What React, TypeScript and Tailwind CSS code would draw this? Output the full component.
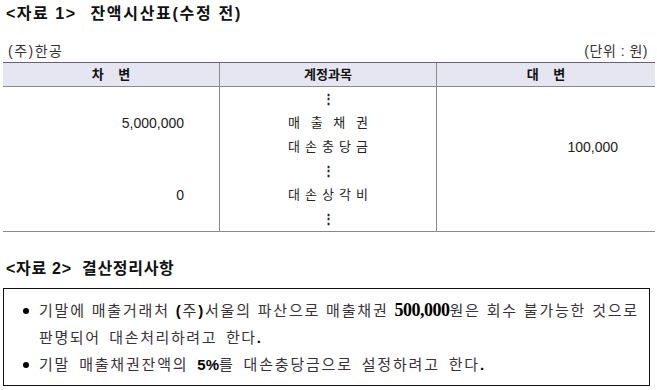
import React from "react";

const sans = "font-['Liberation_Sans','Noto_Sans_CJK_KR',sans-serif]";

const Spread: React.FC<{ text: string[] }> = ({ text }) => (
    <span className="inline-flex w-[80px] justify-between">
        {text.map((c, i) => (
            <span key={i}>{c}</span>
        ))}
    </span>
);

const Bullet = () => (
    <span className="w-[35px] flex justify-end pr-[10px] pt-[11px] shrink-0">
        <span className="block w-[6px] h-[6px] rounded-full bg-black" />
    </span>
);

export default function App() {
    return (
        <div className={`${sans} w-[657px] h-[390px] bg-white text-[#222] overflow-hidden`}>
            {/* 자료 1 */}
            <h2 className="pl-[6px] pt-[4px] h-[22px] text-[16px] leading-[20px] font-bold tracking-[1.5px] text-[#111]">
                &lt;자료 1&gt;&nbsp;{" "}
                <span className="ml-[2px] tracking-[1.7px]">잔액시산표(수정 전)</span>
            </h2>

            <div className="flex justify-between items-end px-[8px] mt-[16px] h-[22px] text-[14px] leading-[18px] tracking-[0.5px] text-[#333]">
                <span className="tracking-[1.5px]">(주)한공</span>
                <span className="pr-[1px]">(단위 : 원)</span>
            </div>

            {/* Trial balance table */}
            <div className="ml-[3px] mr-[2px] mt-[2px] border-b border-[#8a8a8a]">
                <div className="grid grid-cols-[217px_217px_1fr] h-[25px] bg-[#e6e6f2] border-t border-b border-t-[#6e5f75] border-b-[#8a8a8a] text-[13px] font-bold text-[#111] leading-[23px]">
                    <div className="text-center border-r border-[#8a8a8a]">차&nbsp;&nbsp;&nbsp;&nbsp;변</div>
                    <div className="text-center border-r border-[#8a8a8a]">계정과목</div>
                    <div className="text-center">대&nbsp;&nbsp;&nbsp;&nbsp;변</div>
                </div>
                <div className="grid grid-cols-[217px_217px_1fr] text-[14px] leading-[24px]">
                    <div className="flex flex-col items-end pr-[35px] border-r border-[#8a8a8a]">
                        <span>&nbsp;</span>
                        <span>5,000,000</span>
                        <span>&nbsp;</span>
                        <span>&nbsp;</span>
                        <span>0</span>
                        <span>&nbsp;</span>
                    </div>
                    <div className="flex flex-col items-center border-r border-[#8a8a8a] text-[13px]">
                        <span className="font-bold">⋮</span>
                        <Spread text={["매", "출", "채", "권"]} />
                        <Spread text={["대", "손", "충", "당", "금"]} />
                        <span className="font-bold">⋮</span>
                        <Spread text={["대", "손", "상", "각", "비"]} />
                        <span className="font-bold">⋮</span>
                    </div>
                    <div className="flex flex-col items-end pr-[37px]">
                        <span>&nbsp;</span>
                        <span>&nbsp;</span>
                        <span>100,000</span>
                        <span>&nbsp;</span>
                        <span>&nbsp;</span>
                        <span>&nbsp;</span>
                    </div>
                </div>
            </div>

            {/* 자료 2 */}
            <h2 className="pl-[6px] mt-[27px] h-[22px] text-[16px] leading-[20px] font-bold tracking-[0.7px] text-[#111]">
                &lt;자료 2&gt;&nbsp; 결산정리사항
            </h2>

            <div className="ml-[3px] w-[647px] h-[98px] mt-[7px] border border-[#111] pt-[8px] text-[15px] leading-[27px] text-[#3a3238]">
                <div className="flex">
                    <Bullet />
                    <p className="whitespace-nowrap">
                        <span className="tracking-[1.8px]">
                            기말에 매출거래처 <b className="text-black">(</b>주<b className="text-black">)</b>서울의 파산으로 매출채권{" "}
                            <b className="font-['Liberation_Serif'] text-[18px] text-black tracking-[-0.5px]">500,000</b>원은 회수 불가능한 것으로
                        </span>
                        <br />
                        <span className="tracking-[1.6px] [word-spacing:3px]">
                            판명되어 대손처리하려고 한다<b className="text-black">.</b>
                        </span>
                    </p>
                </div>
                <div className="flex">
                    <Bullet />
                    <p className="whitespace-nowrap tracking-[1.8px] [word-spacing:3px]">
                        기말 매출채권잔액의 <b className="font-['Liberation_Sans'] text-black tracking-normal">5%</b>를 대손충당금으로 설정하려고 한다<b className="text-black">.</b>
                    </p>
                </div>
            </div>
        </div>
    );
}
